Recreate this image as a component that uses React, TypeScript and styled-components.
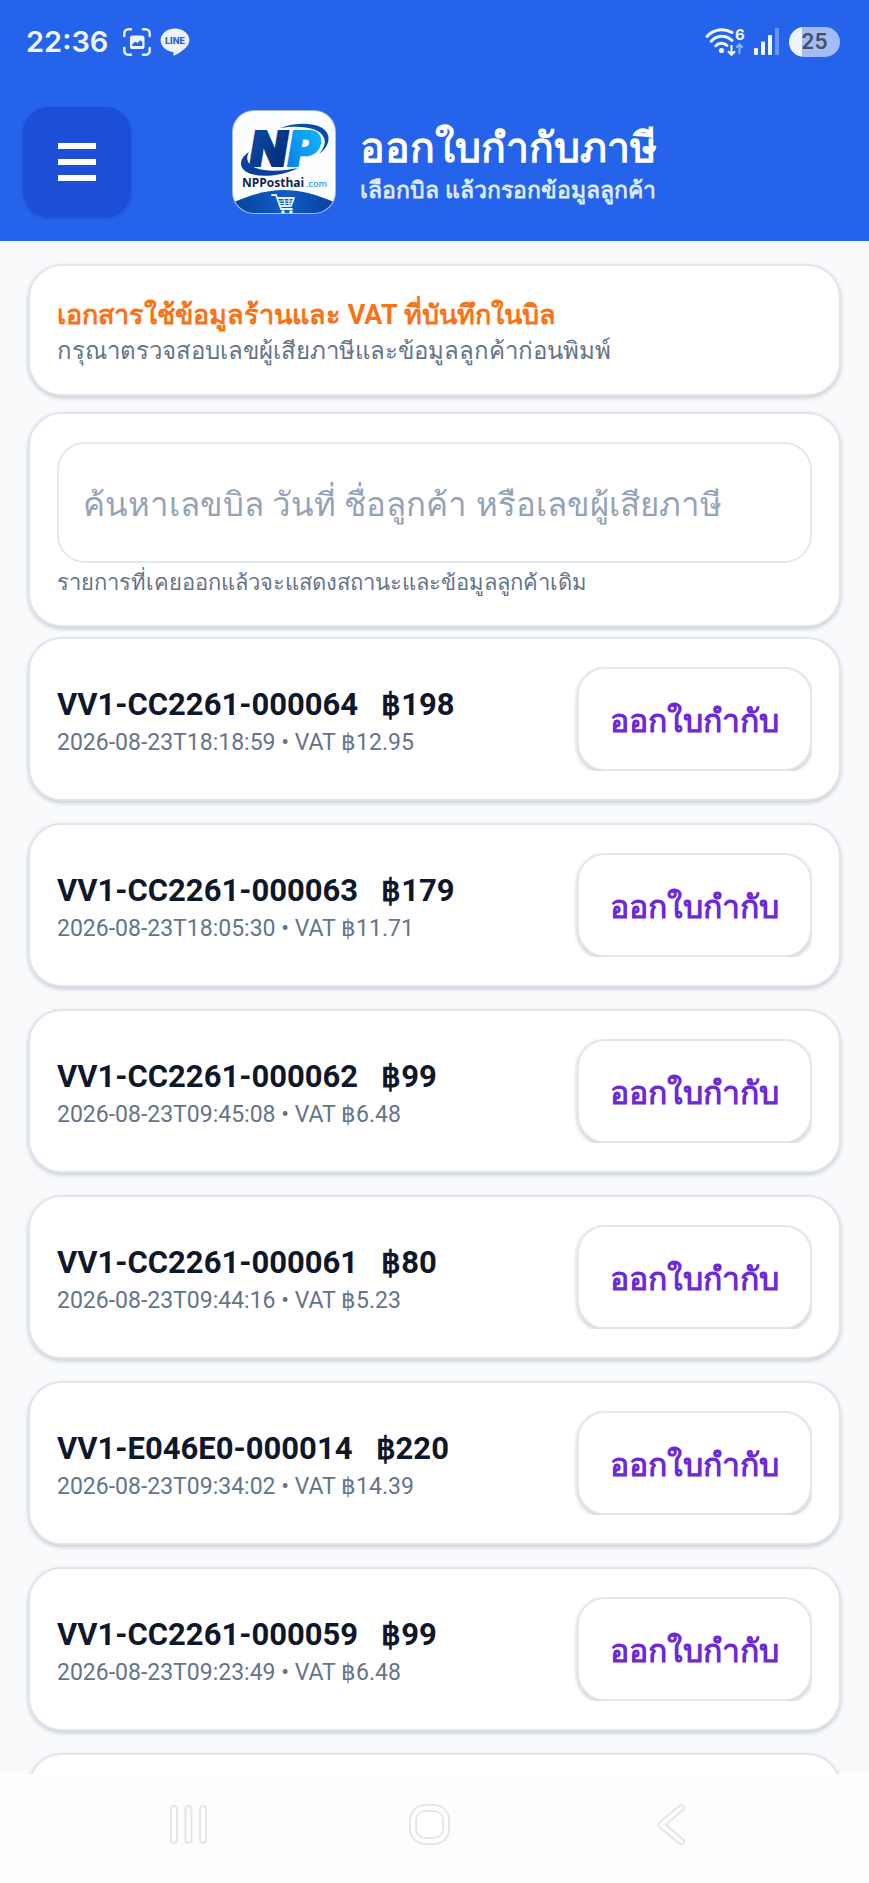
import React, { useState } from 'react';
import styled, { createGlobalStyle } from 'styled-components';

const GlobalStyle = createGlobalStyle`
  *, *::before, *::after { box-sizing: border-box; }
  body {
    margin: 0;
    background: #f8fafc;
    font-family: Roboto, "Noto Sans", sans-serif;
  }
`;

const Shell = styled.div`
  display: flex;
  flex-direction: column;
  height: 100vh;
  overflow: hidden;
`;

const TopArea = styled.header`
  flex: none;
  background: #2563eb;
  color: #ffffff;
`;

const StatusBar = styled.div`
  display: flex;
  align-items: center;
  justify-content: space-between;
  height: 83px;
  padding: 0 29px 0 26px;
`;

const StatusGroup = styled.div`
  display: flex;
  align-items: center;
  gap: 9px;
`;

const Clock = styled.span`
  margin-right: 6px;
  font: 600 29px/36px Inter, sans-serif;
  color: #f1f6ff;
`;

const Battery = styled.span`
  display: flex;
  align-items: center;
  justify-content: center;
  width: 51px;
  height: 30px;
  border-radius: 15px;
  background: linear-gradient(90deg, #eef4ff 25%, #a3bcf6 25%);
  color: #48505f;
  font: 600 21px/30px Inter, sans-serif;
`;

const TitleBar = styled.div`
  display: flex;
  align-items: center;
  height: 158px;
  padding: 0 23px;
`;

const MenuButton = styled.button`
  display: flex;
  flex-direction: column;
  align-items: center;
  justify-content: center;
  gap: 10px;
  width: 108px;
  height: 110px;
  padding: 0;
  border: 0;
  border-radius: 26px;
  background: #1d4ed8;
  box-shadow: 0 1px 3px rgba(15, 40, 120, 0.3);
  cursor: pointer;
`;

const MenuLine = styled.span`
  width: 38px;
  height: 6px;
  background: #ffffff;
`;

const Brand = styled.div`
  display: flex;
  align-items: center;
  gap: 24px;
  margin-left: 101px;
`;

const BrandText = styled.div`
  padding-top: 10px;
  white-space: nowrap;
`;

const PageTitle = styled.h1`
  margin: 0;
  font-size: 41px;
  font-weight: 700;
  line-height: 48px;
`;

const PageSubtitle = styled.p`
  margin: 0;
  color: #dbeafe;
  font-size: 23px;
  font-weight: 600;
  line-height: 38px;
`;

const Content = styled.main`
  flex: 1;
  min-height: 0;
  overflow: hidden;
  padding: 23px 28px 0;
`;

const Card = styled.section`
  border: 2px solid #e2e6ec;
  border-radius: 34px;
  background: #ffffff;
  box-shadow: 0 2px 4px rgba(15, 23, 42, 0.2);
`;

const NoticeCard = styled(Card)`
  height: 132px;
  padding: 31px 27px 0;
`;

const NoticeTitle = styled.h2`
  margin: 0;
  color: #f97316;
  font-size: 27px;
  font-weight: 700;
  line-height: 36px;
`;

const NoticeText = styled.p`
  margin: 0;
  color: #64748b;
  font-size: 24px;
  line-height: 36px;
`;

const SearchCard = styled(Card)`
  height: 215px;
  margin-top: 16px;
  padding: 28px 27px 0;
`;

const SearchInput = styled.input`
  display: block;
  width: 100%;
  height: 121px;
  padding: 4px 24px 0;
  border: 2px solid #e2e8f0;
  border-radius: 28px;
  background: #ffffff;
  color: #0f172a;
  font-family: inherit;
  font-size: 33px;
  outline: none;

  &::placeholder { color: #94a3b8; opacity: 1; }
`;

const SearchHint = styled.p`
  margin: 0;
  color: #64748b;
  font-size: 22px;
  line-height: 40px;
`;

const BillList = styled.ul`
  display: flex;
  flex-direction: column;
  gap: 22px;
  margin: 10px 0 0;
  padding: 0;
  list-style: none;
`;

const BillCard = styled(Card).attrs({ as: 'li' })`
  display: flex;
  align-items: center;
  justify-content: space-between;
  flex: none;
  height: 164px;
  padding: 0 27px;
`;

const BillInfo = styled.div`
  padding-top: 10px;
`;

const BillTitle = styled.h3`
  margin: 0;
  color: #0f172a;
  font-size: 31px;
  font-weight: 700;
  line-height: 38px;
  white-space: pre;
`;

const BillMeta = styled.p`
  margin: 0;
  color: #64748b;
  font-size: 23px;
  line-height: 38px;
`;

const IssueClip = styled.div`
  overflow: hidden;
  padding-left: 4px;
`;

const IssueButton = styled.button`
  display: block;
  width: 235px;
  height: 104px;
  padding: 4px 0 0;
  border: 2px solid #e2e8f0;
  border-radius: 28px;
  background: #ffffff;
  box-shadow: 0 2px 4px rgba(15, 23, 42, 0.24);
  color: #6d28d9;
  font-family: inherit;
  font-size: 32px;
  font-weight: 700;
  line-height: 40px;
  cursor: pointer;
`;

const NavBar = styled.nav`
  display: grid;
  grid-template-columns: repeat(3, 28%);
  flex: none;
  justify-content: center;
  height: 109px;
  padding: 0 8px 8px 0;
  background: #fdfdfd;
`;

const NavButton = styled.button`
  display: flex;
  align-items: center;
  justify-content: center;
  padding: 0;
  border: 0;
  background: none;
  cursor: pointer;
`;

interface Bill {
  number: string;
  total: string;
  time: string;
  vat: string;
}

const BILLS: Bill[] = [
  { number: 'VV1-CC2261-000064', total: '198', time: '2026-08-23T18:18:59', vat: '12.95' },
  { number: 'VV1-CC2261-000063', total: '179', time: '2026-08-23T18:05:30', vat: '11.71' },
  { number: 'VV1-CC2261-000062', total: '99', time: '2026-08-23T09:45:08', vat: '6.48' },
  { number: 'VV1-CC2261-000061', total: '80', time: '2026-08-23T09:44:16', vat: '5.23' },
  { number: 'VV1-E046E0-000014', total: '220', time: '2026-08-23T09:34:02', vat: '14.39' },
  { number: 'VV1-CC2261-000059', total: '99', time: '2026-08-23T09:23:49', vat: '6.48' },
];

const CaptureIcon = () => (
  <svg width="28" height="28" viewBox="0 0 28 28" aria-hidden="true">
    <path
      d="M1.3 8V5.3a4 4 0 0 1 4-4H8M20 1.3h2.7a4 4 0 0 1 4 4V8M26.7 20v2.7a4 4 0 0 1-4 4H20M8 26.7H5.3a4 4 0 0 1-4-4V20"
      fill="none"
      stroke="#e6efff"
      strokeWidth="2.5"
      strokeLinecap="round"
    />
    <rect x="7" y="7.5" width="14.5" height="13.5" rx="2.6" fill="#eef4ff" />
    <path d="M9.3 18v-2l3.2-2.2 2 1.1 2.8-2.6 2 1.6V18z" fill="#2563eb" />
  </svg>
);

const LineIcon = () => (
  <svg width="30" height="28" viewBox="0 0 30 28" aria-hidden="true">
    <path
      d="M15 .5C7 .5.6 5.800.6 12.300c0 5.800 5 10.600 11.900 11.600 1 .2 1.200.8 1.100 1.600l-.2 1.600c0 .6.4.8 1 .5C17 26.200 29.400 20 29.400 12.300 29.400 5.800 23 .5 15 .5z"
      fill="#eef4ff"
    />
    <text x="15" y="16" textAnchor="middle" fontFamily="Inter, sans-serif" fontSize="9" fontWeight="800" fill="#2f63d8">
      LINE
    </text>
  </svg>
);

const WifiIcon = () => (
  <svg width="40" height="30" viewBox="0 0 40 30" aria-hidden="true">
    <g fill="none" stroke="#f1f6ff" strokeWidth="3" strokeLinecap="round">
      <path d="M2 9.500A20 20 0 0 1 27 5.500" />
      <path d="M6.200 14.200A14 14 0 0 1 27 13.500" />
      <path d="M10.800 18.700A8 8 0 0 1 22 18.500" />
    </g>
    <circle cx="16.500" cy="23.500" r="2.600" fill="#f1f6ff" />
    <path d="M26.500 18v9.500M23 24.300l3.500 3.500 3.500-3.500" fill="none" stroke="#f1f6ff" strokeWidth="2.200" />
    <path d="M34.500 27V17.500M31.300 20.500l3.200-3.300 3.200 3.300" fill="none" stroke="#8fb0f7" strokeWidth="2" />
    <text x="30" y="13" fontFamily="Inter, sans-serif" fontSize="15" fontWeight="700" fill="#f1f6ff">
      6
    </text>
  </svg>
);

const SignalIcon = () => (
  <svg width="26" height="28" viewBox="0 0 26 28" aria-hidden="true">
    <g fill="#f1f6ff">
      <rect x="0" y="20" width="4" height="7" rx="1" />
      <rect x="7" y="13.500" width="4" height="13.500" rx="1" />
      <rect x="14" y="7" width="4" height="20" rx="1" />
    </g>
    <rect x="21" y="0" width="4" height="27" rx="1" fill="#6c95f2" />
  </svg>
);

const Logo = () => (
  <svg width="104" height="104" viewBox="0 0 104 104" role="img" aria-label="NPPosthai.com">
    <defs>
      <linearGradient id="nFill" x1="0" y1="0" x2="1" y2="1">
        <stop offset="0" stopColor="#0b4fae" />
        <stop offset="1" stopColor="#04246e" />
      </linearGradient>
      <linearGradient id="pFill" x1="0" y1="1" x2="1" y2="0">
        <stop offset="0" stopColor="#0a7be6" />
        <stop offset="1" stopColor="#12bdfb" />
      </linearGradient>
      <linearGradient id="waveFill" x1="0" y1="0" x2="1" y2="0">
        <stop offset="0" stopColor="#0a3f9b" />
        <stop offset="0.500" stopColor="#0d5fc6" />
        <stop offset="1" stopColor="#0a3f9b" />
      </linearGradient>
      <clipPath id="tile">
        <rect x="1" y="1" width="102" height="102" rx="21" />
      </clipPath>
    </defs>
    <rect x="0" y="0" width="104" height="104" rx="22" fill="#9dbcf5" />
    <g clipPath="url(#tile)">
      <rect width="104" height="104" fill="#fdfeff" />
      <path d="M0 93C20 84 36 80 52 80s32 4 52 13v11H0z" fill="url(#waveFill)" />
    </g>
    <g fontFamily="Inter, sans-serif" fontStyle="italic" fontSize="48" fontWeight="900" strokeWidth="2">
      <text x="18" y="56" fill="url(#nFill)" stroke="url(#nFill)">
        N
      </text>
      <text x="56" y="56" fill="url(#pFill)" stroke="url(#pFill)">
        P
      </text>
    </g>
    <path d="M48 18C66 11 92 12 96 25c2 7-2 14-9 19 5-6 7-11 5-16C88 17 68 15 48 18z" fill="#0b4aa8" />
    <path d="M17 42C6 49 6 60 19 64c14 4 34 1 47-6-14 3-32 4-42 0-8-3-11-9-7-16z" fill="#0a3f9b" />
    <text x="10" y="77" fontFamily='"Open Sans", sans-serif' fontSize="12" fontWeight="700" fill="#12264f">
      NPPosthai
    </text>
    <text x="74" y="77" fontFamily='"Open Sans", sans-serif' fontSize="9" fontWeight="600" fill="#2d9be8">
      .com
    </text>
    <g fill="none" stroke="#e8f3ff" strokeWidth="1.800" strokeLinejoin="round" strokeLinecap="round">
      <path d="M40 85h4l5 14h11M45 88h17l-3 8H48" />
      <path d="M47 91h14M48 93.500h12M52 88l1 8M57 88v8" strokeWidth="1.200" />
    </g>
    <circle cx="51" cy="102" r="1.800" fill="#e8f3ff" />
    <circle cx="59" cy="102" r="1.800" fill="#e8f3ff" />
  </svg>
);

const RecentsIcon = () => (
  <svg width="38" height="42" viewBox="0 0 38 42" aria-hidden="true">
    <g fill="#ffffff" stroke="#e6e6e6" strokeWidth="2">
      <rect x="1" y="2" width="6" height="37" rx="3" />
      <rect x="15.500" y="2" width="6" height="37" rx="3" />
      <rect x="30" y="2" width="6" height="37" rx="3" />
    </g>
  </svg>
);

const HomeIcon = () => (
  <svg width="42" height="42" viewBox="0 0 42 42" aria-hidden="true">
    <g fill="#ffffff" stroke="#e6e6e6" strokeWidth="2">
      <rect x="1" y="1" width="39" height="39" rx="15" />
      <rect x="7" y="7" width="27" height="27" rx="9" />
    </g>
  </svg>
);

const BackIcon = () => (
  <svg width="30" height="42" viewBox="0 0 30 42" aria-hidden="true">
    <path
      d="M22.600 1.800 2.300 18.600a2.800 2.800 0 0 0 0 4.300L22.600 39.700c3 2.300 6-1.600 3.600-4L8.800 20.800 26.200 5.800c2.400-2.400-.6-6.300-3.600-4z"
      fill="#ffffff"
      stroke="#e6e6e6"
      strokeWidth="2"
    />
  </svg>
);

export default function App() {
  const [query, setQuery] = useState('');
  const bills = BILLS.filter((bill) => bill.number.includes(query) || bill.time.includes(query));

  return (
    <Shell>
      <GlobalStyle />
      <TopArea>
        <StatusBar>
          <StatusGroup>
            <Clock>22:36</Clock>
            <CaptureIcon />
            <LineIcon />
          </StatusGroup>
          <StatusGroup>
            <WifiIcon />
            <SignalIcon />
            <Battery>25</Battery>
          </StatusGroup>
        </StatusBar>
        <TitleBar>
          <MenuButton type="button" aria-label="เมนู">
            <MenuLine />
            <MenuLine />
            <MenuLine />
          </MenuButton>
          <Brand>
            <Logo />
            <BrandText>
              <PageTitle>ออกใบกำกับภาษี</PageTitle>
              <PageSubtitle>เลือกบิล แล้วกรอกข้อมูลลูกค้า</PageSubtitle>
            </BrandText>
          </Brand>
        </TitleBar>
      </TopArea>

      <Content>
        <NoticeCard>
          <NoticeTitle>เอกสารใช้ข้อมูลร้านและ VAT ที่บันทึกในบิล</NoticeTitle>
          <NoticeText>กรุณาตรวจสอบเลขผู้เสียภาษีและข้อมูลลูกค้าก่อนพิมพ์</NoticeText>
        </NoticeCard>

        <SearchCard>
          <SearchInput
            type="text"
            aria-label="ค้นหาบิล"
            aria-describedby="search-hint"
            placeholder="ค้นหาเลขบิล วันที่ ชื่อลูกค้า หรือเลขผู้เสียภาษี"
            value={query}
            onChange={(event) => setQuery(event.target.value)}
          />
          <SearchHint id="search-hint">รายการที่เคยออกแล้วจะแสดงสถานะและข้อมูลลูกค้าเดิม</SearchHint>
        </SearchCard>

        <BillList>
          {bills.map((bill) => (
            <BillCard key={bill.number}>
              <BillInfo>
                <BillTitle>{`${bill.number}   ฿${bill.total}`}</BillTitle>
                <BillMeta>{`${bill.time} • VAT ฿${bill.vat}`}</BillMeta>
              </BillInfo>
              <IssueClip>
                <IssueButton type="button">ออกใบกำกับ</IssueButton>
              </IssueClip>
            </BillCard>
          ))}
          <BillCard aria-hidden="true" />
        </BillList>
      </Content>

      <NavBar>
        <NavButton type="button" aria-label="แอปล่าสุด">
          <RecentsIcon />
        </NavButton>
        <NavButton type="button" aria-label="หน้าหลัก">
          <HomeIcon />
        </NavButton>
        <NavButton type="button" aria-label="ย้อนกลับ">
          <BackIcon />
        </NavButton>
      </NavBar>
    </Shell>
  );
}
